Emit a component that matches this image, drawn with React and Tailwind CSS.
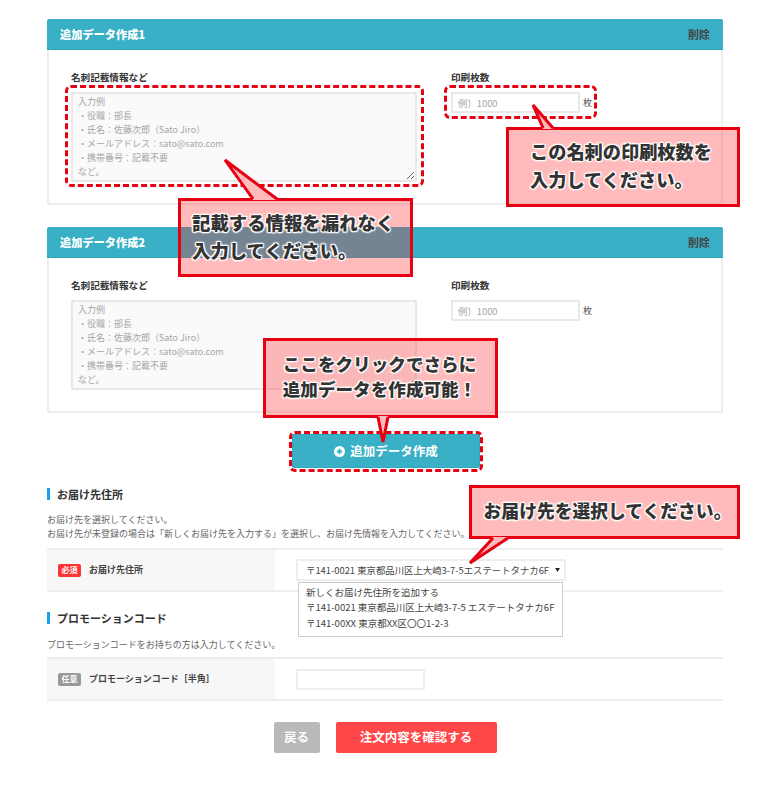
import { useState } from 'react';

const placeholderText = `入力例
・役職：部長
・氏名：佐藤次郎（Sato Jiro）
・メールアドレス：sato@sato.com
・携帯番号：記載不要
など。`;

const addressOptions = [
  '新しくお届け先住所を追加する',
  '〒141-0021 東京都品川区上大崎3-7-5 エステートタナカ6F',
  '〒141-00XX 東京都XX区〇〇1-2-3',
];

const tails = [
  { fill: '253,200 225,160 277,200', line: '253,199 225,160 277,199' },
  { fill: '543,129 533,105 553,129', line: '543,128 533,105 553,128' },
  { fill: '378,416 383,442 388,416', line: '378,417 383,442 388,417' },
  { fill: '493,537 470,563 508,537', line: '493,538 470,563 508,538' },
];

function DataCard({ title }) {
  return (
    <div className="h-[186px] rounded-[2px] border-x-2 border-b-2 border-[#eeeeee] bg-white">
      <div className="-mx-0.5 flex h-[31px] items-center justify-between rounded-t-[2px] border-b border-[#2ea6bc] bg-[#3ab0c6] pl-[13px] pr-[13px]">
        <h3 className="text-[11.2px] font-black text-white">{title}</h3>
        <button className="text-[11px] font-bold text-[#444444]">削除</button>
      </div>
      <div className="flex pl-[22px] pt-[20px]">
        <div className="w-[380px]">
          <label className="mb-[8px] block text-[9.6px] font-bold leading-[14px] text-[#333333]">名刺記載情報など</label>
          <textarea
            placeholder={placeholderText}
            className="block h-[90px] w-[346px] rounded-[1px] border-2 border-[#e8e8e8] bg-[#fafafa] px-[5px] py-[1px] text-[9px] leading-[14px] placeholder:text-[#a5a5a5]"
          />
        </div>
        <div>
          <label className="mb-[8px] block text-[9.6px] font-bold leading-[14px] text-[#333333]">印刷枚数</label>
          <div className="flex items-center">
            <input
              type="text"
              placeholder="例）1000"
              className="h-[21px] w-[129px] rounded-[1px] border-2 border-[#e8e8e8] bg-white px-[5px] text-[9.4px] placeholder:text-[#a5a5a5]"
            />
            <span className="ml-[3px] text-[9px] text-[#555555]">枚</span>
          </div>
        </div>
      </div>
    </div>
  );
}

function SectionTitle({ children }) {
  return (
    <h2 className="flex h-[14px] items-center border-l-[3px] border-[#1e9fe8] pl-[7px] text-[11px] font-bold leading-[10px] text-[#333333] [border-image:linear-gradient(transparent_2px,#1e9fe8_2px,#1e9fe8_12px,transparent_12px)_1]">
      {children}
    </h2>
  );
}

function FormRow({ badge, badgeColor, label, children }) {
  return (
    <div className="flex h-[44px] border-y-2 border-[#eeeeee]">
      <div className="flex w-[228px] items-center bg-[#f7f7f7] pl-[11px]">
        <span className={`flex h-[13px] w-[23px] items-center justify-center rounded-[2px] text-[8px] font-bold text-white ${badgeColor}`}>
          {badge}
        </span>
        <span className="ml-[8px] text-[9px] font-bold text-[#444444]">{label}</span>
      </div>
      <div className="relative flex flex-1 items-center pl-[21px]">{children}</div>
    </div>
  );
}

function Callout({ className, children }) {
  return (
    <div className={`absolute flex flex-col justify-center border-[3px] border-[#e60012] bg-[rgba(255,30,30,0.3)] pb-[4px] font-black text-[#333333] [text-shadow:0_0_2px_#fff,0_0_2px_#fff,0_0_2px_#fff,0_0_3px_#fff,1px_1px_1px_#fff,-1px_-1px_1px_#fff,1px_-1px_1px_#fff,-1px_1px_1px_#fff] ${className}`}>
      {children}
    </div>
  );
}

export default function App() {
  const [address] = useState(addressOptions[1]);

  return (
    <div className="relative h-[785px] w-[770px] overflow-hidden bg-white font-['Noto_Sans_CJK_JP','Noto_Sans',sans-serif] text-[#555555]">
      <div className="px-[47px] pt-[19px]">
        <div className="w-[676px]">
          <DataCard title="追加データ作成1" />
          <div className="mt-[22px]">
            <DataCard title="追加データ作成2" />
          </div>

          <div className="mt-[21px] flex justify-center pl-[2px]">
            <button className="flex h-[34px] w-[188px] items-center justify-center gap-[5px] rounded-[2px] border border-[#2ea6bc] bg-[#3ab0c6] text-[12.5px] font-bold text-white">
              <svg viewBox="0 0 12 12" className="h-[11px] w-[11px]">
                <circle cx="6" cy="6" r="6" fill="#ffffff" />
                <path d="M6 3v6M3 6h6" stroke="#3ab0c6" strokeWidth="2" />
              </svg>
              追加データ作成
            </button>
          </div>

          {/* お届け先 */}
          <div className="mt-[19px]">
            <SectionTitle>お届け先住所</SectionTitle>
            <p className="mt-[12px] text-[9px] leading-[14px] text-[#666666]">
              お届け先を選択してください。
              <br />
              お届け先が未登録の場合は「新しくお届け先を入力する」を選択し、お届け先情報を入力してください。
            </p>
            <div className="mt-[7px]">
              <FormRow badge="必須" badgeColor="bg-[#ff3333]" label="お届け先住所">
                <div className="flex h-[22px] w-[270px] items-center justify-between border-2 border-[#eeeeee] bg-white pl-[8px] pr-[4px] text-[9.4px] text-[#444444]">
                  <span className="whitespace-nowrap">{address.replace('3-7-5 ', '3-7-5')}</span>
                  <svg viewBox="0 0 6 5" className="h-[4px] w-[5px]">
                    <path d="M0 0h6L3 5z" fill="#222222" />
                  </svg>
                </div>
                <ul className="absolute left-[23px] top-[32px] z-10 h-[55px] w-[265px] border border-[#cccccc] bg-white px-[7px] py-[2px] text-[9.5px] leading-[15.3px] text-[#444444]">
                  {addressOptions.map((option) => (
                    <li key={option} className="whitespace-nowrap">{option}</li>
                  ))}
                </ul>
              </FormRow>
            </div>
          </div>

          {/* プロモーションコード */}
          <div className="mt-[19px]">
            <SectionTitle>プロモーションコード</SectionTitle>
            <p className="mt-[13px] text-[9px] leading-[14px] text-[#666666]">プロモーションコードをお持ちの方は入力してください。</p>
            <div className="mt-[5px]">
              <FormRow badge="任意" badgeColor="bg-[#999999]" label="プロモーションコード［半角］">
                <input type="text" className="h-[21px] w-[129px] border-2 border-[#eeeeee] bg-white" />
              </FormRow>
            </div>
          </div>

          <div className="mt-[21px] flex justify-center gap-[16px]">
            <button className="h-[31px] w-[46px] rounded-[2px] bg-[#b9b9b9] text-[12.5px] font-bold text-white">戻る</button>
            <button className="h-[31px] w-[161px] rounded-[2px] bg-[#ff4747] text-[12.5px] font-bold text-white">注文内容を確認する</button>
          </div>
        </div>
      </div>

      {/* 説明の注釈 */}
      <div className="absolute left-[65px] top-[85px] h-[102px] w-[359px] rounded-md border-[3px] border-dashed border-[#e60012]" />
      <div className="absolute left-[444px] top-[85px] h-[34px] w-[153px] rounded-md border-[3px] border-dashed border-[#e60012]" />
      <div className="absolute left-[289px] top-[431px] h-[41px] w-[194px] rounded-md border-[3px] border-dashed border-[#e60012]" />

      <Callout className="left-[178px] top-[198px] h-[79px] w-[235px] pl-[11px] text-[18.4px] leading-[28px]">
        <span>記載する情報を漏れなく</span>
        <span>入力してください。</span>
      </Callout>
      <Callout className="left-[506px] top-[127px] h-[80px] w-[234px] pl-[21px] text-[18.2px] leading-[28px]">
        <span>この名刺の印刷枚数を</span>
        <span>入力してください。</span>
      </Callout>
      <Callout className="left-[263px] top-[338px] h-[80px] w-[235px] items-center pr-[2px] text-[17.6px] leading-[25px]">
        <span>ここをクリックでさらに</span>
        <span>追加データを作成可能！</span>
      </Callout>
      <Callout className="left-[469px] top-[485px] h-[54px] w-[271px] items-center pl-[6px] text-[17.8px] leading-[25px]">
        <span>お届け先を選択してください。</span>
      </Callout>

      <svg viewBox="0 0 770 785" className="pointer-events-none absolute left-0 top-0 h-[785px] w-[770px]">
        {tails.map((tail) => (
          <g key={tail.fill}>
            <polygon points={tail.fill} fill="#ffbbbb" />
            <polyline points={tail.line} fill="none" stroke="#e60012" strokeWidth="3" />
          </g>
        ))}
      </svg>
    </div>
  );
}
